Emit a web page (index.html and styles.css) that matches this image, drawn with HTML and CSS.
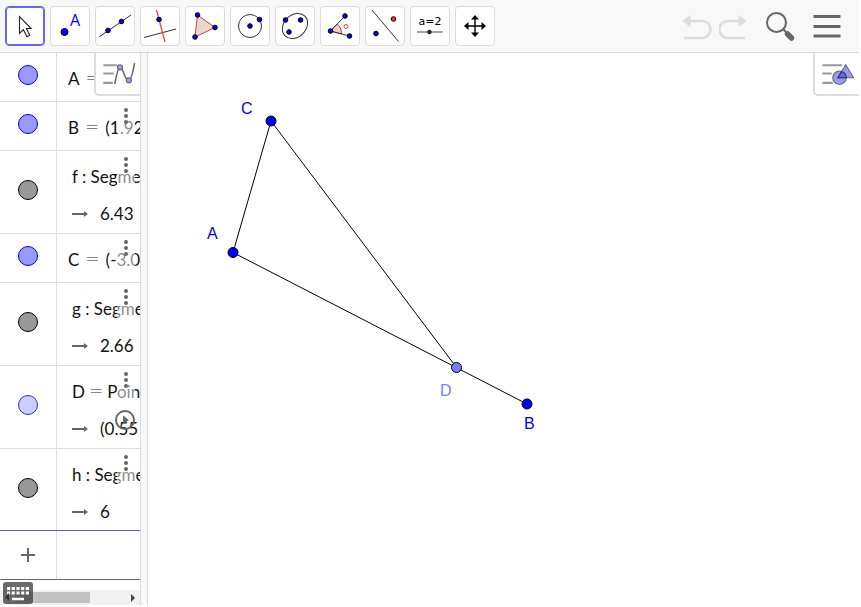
FILE: index.html
```
<!DOCTYPE html>
<html lang="en">
<head>
<meta charset="utf-8">
<title>Geometry</title>
<link rel="stylesheet" href="styles.css">
</head>
<body>
<div class="app">
<header class="toolbar">
  <div class="tools">
    <button class="tool selected" aria-label="Move"><svg viewBox="0 0 36 36"><path d="M13.500 9.500V26.500L17.300 22.700l3.700 7 2.800-1.500-3.400-6.700h4.800z" fill="#fff" stroke="#222" stroke-width="1.100"/></svg></button>
    <button class="tool" aria-label="Point"><svg viewBox="0 0 36 36"><circle class="pt" cx="13.500" cy="25" r="3.500"/><text x="19" y="19" class="pt-label">A</text></svg></button>
    <button class="tool" aria-label="Line"><svg viewBox="0 0 36 36"><path class="ln" d="M3 30L35 8"/><circle class="pt" cx="12" cy="23.500" r="2.300"/><circle class="pt" cx="25.500" cy="14.500" r="2.300"/></svg></button>
    <button class="tool" aria-label="Perpendicular line"><svg viewBox="0 0 36 36"><path class="ln" d="M3 30.500L35 22"/><path d="M15.500 3L24 35" stroke="#f33" stroke-width="1.200"/><circle class="pt" cx="18" cy="12.500" r="2.300"/></svg></button>
    <button class="tool" aria-label="Polygon"><svg viewBox="0 0 36 36"><path d="M11.500 8L29 20.500 9 30z" fill="#edd5cf" stroke="#b64a32"/><circle class="pt" cx="11.500" cy="8" r="2.300"/><circle class="pt" cx="29" cy="20.500" r="2.300"/><circle class="pt" cx="9" cy="30" r="2.300"/></svg></button>
    <button class="tool" aria-label="Circle"><svg viewBox="0 0 36 36"><circle class="ln" cx="19" cy="19" r="11.500"/><circle class="pt" cx="19" cy="19" r="2.300"/><circle class="pt" cx="28.500" cy="12.500" r="2.300"/></svg></button>
    <button class="tool" aria-label="Ellipse"><svg viewBox="0 0 36 36"><ellipse class="ln" cx="19" cy="19" rx="14" ry="11" transform="rotate(-45 19 19)"/><circle class="pt" cx="9.500" cy="13" r="2.300"/><circle class="pt" cx="24.500" cy="13" r="2.300"/><circle class="pt" cx="13" cy="25" r="2.300"/></svg></button>
    <button class="tool" aria-label="Angle"><svg viewBox="0 0 36 36"><path d="M9.500 24l6.500-7q4.500 3 4.500 10z" fill="#f3cfc9" stroke="#d33"/><path class="ln" d="M24 9L9.500 24 28.500 29"/><circle cx="25" cy="19.500" r="2" fill="none" stroke="#f33"/><circle class="pt" cx="24" cy="9" r="2.300"/><circle class="pt" cx="9.500" cy="24" r="2.300"/><circle class="pt" cx="28.500" cy="29" r="2.300"/></svg></button>
    <button class="tool" aria-label="Reflect"><svg viewBox="0 0 36 36"><path class="ln" d="M6 3L32.500 34.500"/><circle class="pt" cx="10" cy="26.500" r="2.300"/><circle class="pt red" cx="27.500" cy="12" r="2.300"/></svg></button>
    <button class="tool" aria-label="Slider"><svg viewBox="0 0 36 36"><text x="19" y="18" class="slider-label">a=2</text><path d="M6 25H31.500" stroke="#666" stroke-width="1.200"/><circle cx="18.500" cy="25" r="2.200" fill="#223"/></svg></button>
    <button class="tool" aria-label="Move view"><svg viewBox="0 0 36 36"><path d="M19 10V28M10 19H28" stroke="#000" stroke-width="1.400"/><path d="M19 8l4 4.500h-8zM19 30l4-4.500h-8zM8 19l4.500-4v8zM30 19l-4.500-4v8z"/></svg></button>
  </div>
  <div class="actions">
    <button class="action" aria-label="Undo"><svg viewBox="0 0 30 30"><path d="M7 9H20a8 8 0 0 1 0 17H2" transform="translate(0 1)" fill="none" stroke="#dcdcdc" stroke-width="2.500"/><path d="M0 10L8.500 4v12z" fill="#dcdcdc"/></svg></button>
    <button class="action" aria-label="Redo"><svg viewBox="0 0 30 30"><path d="M21 9H9a8 8 0 0 0 0 17H26" transform="translate(0 1)" fill="none" stroke="#dcdcdc" stroke-width="2.500"/><path d="M28 10L19.500 4v12z" fill="#dcdcdc"/></svg></button>
    <button class="action search" aria-label="Search"><svg viewBox="0 0 30 30"><circle cx="11.500" cy="11.500" r="9.500" fill="none" stroke="#666" stroke-width="2"/><path d="M18 18l3 3" stroke="#666" stroke-width="2"/><path d="M22.500 23l4 4" stroke="#666" stroke-width="5.500" stroke-linecap="round"/></svg></button>
    <button class="action menu" aria-label="Menu"><svg viewBox="0 0 30 30"><path d="M1.500 5.500H28.500M1.500 15.500H28.500M1.500 25H28.500" stroke="#666" stroke-width="3"/></svg></button>
  </div>
</header>
<main class="workspace">
  <section class="algebra" aria-label="Algebra">
    <button class="stylebar left" aria-label="Algebra style"><svg viewBox="0 0 34 24"><path d="M1 4H14M1 12H11M1 21H10" stroke="#999" stroke-width="2"/><path d="M12 22Q15 6 17 6C20 6 22 19 25 19Q28 19 31 2" fill="none" stroke="#666" stroke-width="1.500"/><circle cx="17" cy="6" r="2.500" fill="#99f" stroke="#666"/><circle cx="25.500" cy="18.500" r="2.500" fill="#99f" stroke="#666"/></svg></button>
    <ul class="rows">
      <li class="row"><button class="marble" aria-label="Toggle A"></button><div class="expr"><p>A<span class="op">=</span></p></div></li>
      <li class="row"><button class="marble" aria-label="Toggle B"></button><div class="expr"><p>B<span class="op">=</span>(1.92</p></div><button class="more" aria-label="More"><i></i><i></i><i></i></button></li>
      <li class="row"><button class="marble dark" aria-label="Toggle f"></button><div class="expr wide"><p>f : Segme</p><p><svg class="arrow" viewBox="0 0 16 8"><path d="M0 4H13" stroke="#666" stroke-width="2"/><path d="M16 4l-4-3v6z" fill="#666"/></svg>6.43</p></div><button class="more" aria-label="More"><i></i><i></i><i></i></button></li>
      <li class="row"><button class="marble" aria-label="Toggle C"></button><div class="expr"><p>C<span class="op">=</span>(-3.0</p></div><button class="more" aria-label="More"><i></i><i></i><i></i></button></li>
      <li class="row"><button class="marble dark" aria-label="Toggle g"></button><div class="expr wide"><p>g : Segme</p><p><svg class="arrow" viewBox="0 0 16 8"><path d="M0 4H13" stroke="#666" stroke-width="2"/><path d="M16 4l-4-3v6z" fill="#666"/></svg>2.66</p></div><button class="more" aria-label="More"><i></i><i></i><i></i></button></li>
      <li class="row"><button class="marble light" aria-label="Toggle D"></button><div class="expr wide"><p>D<span class="op tight">=</span>Point</p><p><svg class="arrow" viewBox="0 0 16 8"><path d="M0 4H13" stroke="#666" stroke-width="2"/><path d="M16 4l-4-3v6z" fill="#666"/></svg>(0.55</p></div><button class="more" aria-label="More"><i></i><i></i><i></i></button><button class="play" aria-label="Play"><svg viewBox="0 0 20 20"><circle cx="10" cy="10" r="9" fill="none" stroke="#666" stroke-width="2"/><path d="M8 5.500l6 4.500-6 4.500z" fill="#666"/></svg></button></li>
      <li class="row"><button class="marble dark" aria-label="Toggle h"></button><div class="expr wide"><p>h : Segme</p><p><svg class="arrow" viewBox="0 0 16 8"><path d="M0 4H13" stroke="#666" stroke-width="2"/><path d="M16 4l-4-3v6z" fill="#666"/></svg>6</p></div><button class="more" aria-label="More"><i></i><i></i><i></i></button></li>
    </ul>
    <div class="entry"><button class="plus" aria-label="Add"><svg viewBox="0 0 14 14"><path d="M7 0V14M0 7H14" stroke="#666" stroke-width="2"/></svg></button><input aria-label="Input"></div>
    <div class="scroll"><span class="thumb"></span><svg viewBox="0 0 15 15"><path d="M6 4l4 4-4 4z" fill="#444"/></svg></div>
    <button class="keyboard" aria-label="Keyboard"><svg viewBox="0 0 30 22"><rect width="30" height="22" rx="3" fill="#444" fill-opacity=".8"/><path d="M4 6.500H26M4 11H26" stroke="#fff" stroke-width="3" stroke-dasharray="3.200 1.500"/><path d="M9 17H21" stroke="#fff" stroke-width="2.500"/><path d="M2 15l4-4v8z" fill="#333"/></svg></button>
  </section>
  <div class="splitter"></div>
  <section class="graphics" aria-label="Graphics">
    <svg class="canvas" width="711" height="552">
      <g transform="translate(-148 -53)"><path d="M527 404L233 252.500 271 121 456.500 367.500" fill="none" stroke="#000"/>
      <g fill="#00f" stroke="#000"><circle cx="271" cy="121" r="5"/><circle cx="233" cy="252.500" r="5"/><circle cx="527" cy="404" r="5"/><circle cx="456.500" cy="367.500" r="5" fill="#7d7dff"/></g>
      <g class="names"><text x="241" y="114">C</text><text x="207" y="239">A</text><text x="524" y="429">B</text><text x="440" y="396" class="faint">D</text></g></g>
    </svg>
    <button class="stylebar right" aria-label="Graphics style"><svg viewBox="0 0 34 24"><path d="M1 4H20M1 12H10M1 21H11" stroke="#999" stroke-width="2"/><circle cx="17.500" cy="16" r="6.500" fill="#99f" stroke="#666"/><path d="M23.500 3.500L31 16H16z" fill="#99f" stroke="#666"/><path d="M19.500 10a6.500 6.500 0 0 1 4.500 6h-8z" fill="#66f" stroke="#333"/></svg></button>
  </section>
</main>
</div>
</body>
</html>
```
FILE: styles.css
```
* { box-sizing: border-box; }
body { margin: 0; background: #fff; font-family: Lato, sans-serif; color: #111; overflow: hidden; }
button { padding: 0; border: 0; background: none; }
svg { display: block; }
.app { height: 100vh; padding: 0 2px 2px 0; display: flex; flex-direction: column; }
.toolbar { flex: none; height: 53px; display: flex; justify-content: space-between; align-items: center; padding: 0 17px 0 5px; background: #f8f8f8; border-bottom: 1px solid #dcdcdc; }
.tools { display: flex; gap: 5px; }
.tool { width: 40px; height: 40px; border: 1px solid #dcdcdc; border-radius: 4px; background: #fff; display: grid; place-items: start; }
.tool svg { width: 36px; height: 36px; }
.tool.selected { border-color: #66f; box-shadow: inset 0 0 0 1px #66f; }
.pt { fill: #00f; stroke: #000; stroke-width: 1; }
.pt.red { fill: #f33; }
.ln { fill: none; stroke: #333; stroke-width: 1; }
.pt-label { font: 16px "Open Sans", sans-serif; fill: #00f; }
.slider-label { font: 11px "DejaVu Sans", sans-serif; text-anchor: middle; }
.actions { display: flex; align-items: center; gap: 7px; }
.action svg { width: 30px; height: 30px; }
.search { margin-left: 9px; }
.menu { margin-left: 10px; }
.workspace { flex: 1; min-height: 0; display: flex; }
.algebra { width: 140px; flex: none; position: relative; overflow: hidden; display: flex; flex-direction: column; }
.rows { list-style: none; margin: 0; padding: 0; }
.row { position: relative; display: grid; grid-template-columns: 56px 1fr; align-items: stretch; border-bottom: 1px solid #dcdcdc; }
.row:last-child { border-bottom: 0; margin-bottom: -1px; }
.marble { width: 20px; height: 20px; align-self: center; justify-self: center; border: 1px solid #00f; border-radius: 50%; background: #99f; margin-bottom: 4px; }
.marble.dark { border-color: #000; background: #999; }
.marble.light { border-color: #33b; background: #ccf; }
.expr { border-left: 1px solid #dcdcdc; padding: 7px 0 4px 11px; overflow: hidden; white-space: nowrap; font-size: 17px; }
.expr.wide { padding: 7px 0 1px 15px; }
.expr p { margin: 0; height: 37px; line-height: 37px; display: flex; align-items: center; }
.op { margin: 0 6px; font-family: "DejaVu Sans", sans-serif; font-weight: 200; color: #222; }
.op.tight { margin: 0 4px; }
.arrow { width: 16px; height: 8px; margin-right: 12px; flex: none; }
.more { position: absolute; right: 5px; top: 2px; width: 18px; height: 34px; padding: 4px 0; background: rgba(255, 255, 255, .5); display: flex; flex-direction: column; align-items: center; gap: 2px; }
.more i { width: 4px; height: 4px; border-radius: 50%; background: #666; }
.play { position: absolute; right: 5px; top: 44px; }
.play svg { width: 20px; height: 20px; }
.entry { position: relative; flex: none; height: 50px; border: 1px solid #6557c9; border-width: 1px 0; display: grid; grid-template-columns: 56px 1fr; }
.plus { display: grid; place-items: center; }
.plus svg { width: 14px; height: 14px; }
.entry input { min-width: 0; border: 0; border-left: 1px solid #dcdcdc; outline: 0; }
.scroll { margin-top: auto; height: 15px; background: #f1f1f1; display: flex; justify-content: space-between; }
.scroll .thumb { width: 75px; margin: 2px 0 2px 15px; background: #c1c1c1; }
.scroll svg { width: 15px; height: 15px; }
.keyboard { position: absolute; left: 3px; bottom: 1px; }
.keyboard svg { width: 30px; height: 22px; }
.splitter { width: 8px; flex: none; background: #f8f8f8; border: 1px solid #dcdcdc; border-width: 0 1px; }
.graphics { flex: 1; min-width: 0; position: relative; overflow: hidden; }
.names { font: 16px "Liberation Sans", sans-serif; fill: #00f; }
.names .faint { fill: #7d7dff; }
.stylebar { position: absolute; top: 0; right: 0; z-index: 2; width: 46px; height: 43px; padding-left: 3px; background: #fff; border: 1px solid #dcdcdc; border-width: 0 0 2px 2px; border-radius: 0 0 0 5px; display: grid; place-items: center; }
.stylebar svg { width: 36px; height: 25px; }
```
